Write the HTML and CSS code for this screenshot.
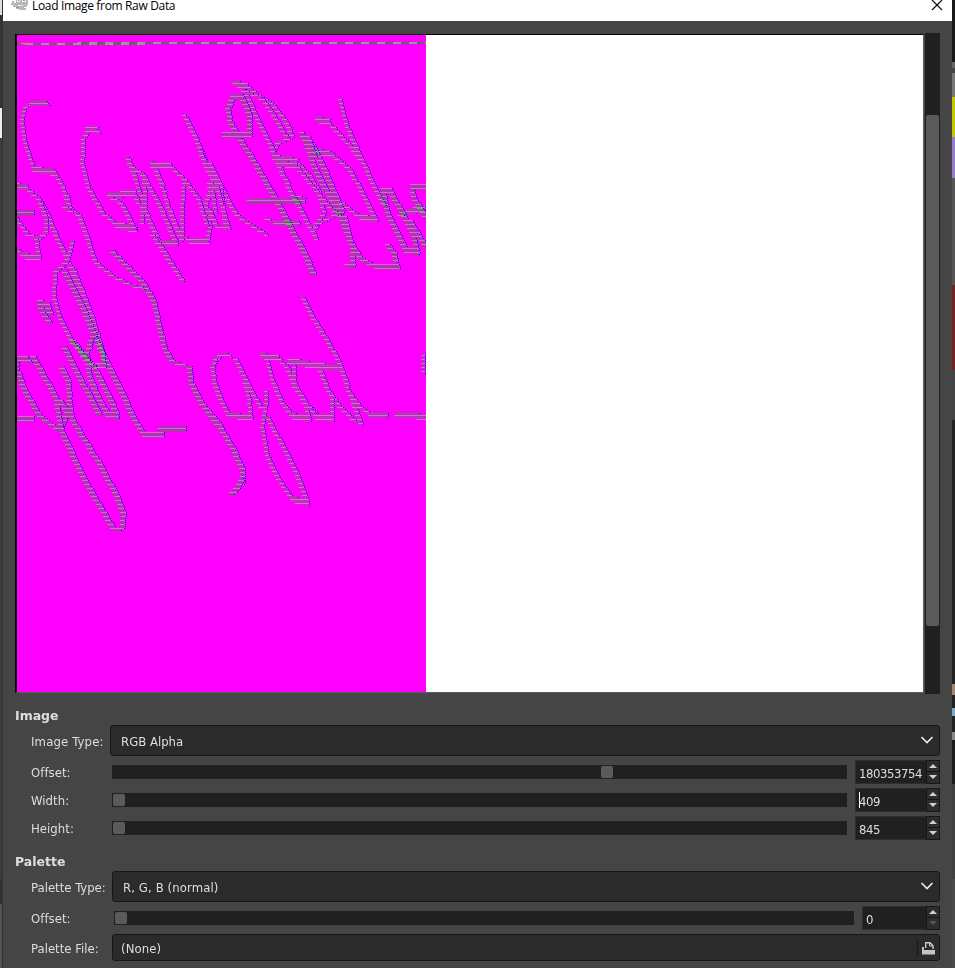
FILE: index.html
```html
<!DOCTYPE html>
<html lang="en">
<head>
<meta charset="utf-8">
<title>Load Image from Raw Data</title>
<link rel="stylesheet" href="styles.css">
</head>
<body>
<div class="desktop">
  <div class="edge-left"></div>
  <main class="dialog">
    <header class="titlebar">
      <svg class="logo" width="18" height="15" viewBox="0 0 18 15"><path fill="#b8b8b8" d="M1 3h2v2h2V0h11v2h1v5h-1v2h-3v1h2v2H8v-1H5V9H2V7H0V5h1z"/><path fill="#eee" d="M6 1h3v3H6zM11 1h4v3h-4zM7 7h5v1H7z"/><path fill="#999" d="M7 2h1v1H7zM12 2h2v1h-2zM5 9h3v1H5z"/></svg>
      <h1>Load Image from Raw Data</h1>
      <svg class="close" width="12" height="12" viewBox="0 0 12 12"><path d="M1 0L11 10M11 0L1 10" stroke="#111" stroke-width="1.2"/></svg>
    </header>
    <section class="view">
      <div class="frame"><canvas id="preview" width="409" height="657"></canvas></div>
      <div class="scroll"><div class="thumb"></div></div>
    </section>
    <section class="group image">
      <h2>Image</h2>
      <div class="row combo-row"><label>Image Type:</label><div class="combo"><span>RGB Alpha</span><svg class="chev" width="14" height="8"><path d="M1.5 1L7 6.5L12.500 1"/></svg></div></div>
      <div class="row"><label>Offset:</label><div class="track"><i class="knob mid"></i></div><div class="spin"><span>180353754</span><div class="btns"><b><i class="up"></i></b><b><i class="down"></i></b></div></div></div>
      <div class="row"><label>Width:</label><div class="track"><i class="knob"></i></div><div class="spin"><span class="caret">409</span><div class="btns"><b><i class="up"></i></b><b><i class="down"></i></b></div></div></div>
      <div class="row"><label>Height:</label><div class="track"><i class="knob"></i></div><div class="spin"><span>845</span><div class="btns"><b><i class="up"></i></b><b><i class="down"></i></b></div></div></div>
    </section>
    <section class="group palette">
      <h2>Palette</h2>
      <div class="row combo-row"><label>Palette Type:</label><div class="combo"><span>R, G, B (normal)</span><svg class="chev" width="14" height="8"><path d="M1.500 1L7 6.500L12.500 1"/></svg></div></div>
      <div class="row"><label>Offset:</label><div class="track"><i class="knob"></i></div><div class="spin"><span>0</span><div class="btns"><b><i class="up"></i></b><b><i class="down off"></i></b></div></div></div>
      <div class="row file-row"><label>Palette File:</label><div class="combo file"><span>(None)</span><svg class="open" width="22" height="20" viewBox="0 0 22 20"><path d="M.5 1v18" stroke="#191919"/><path d="M8.700 10V4.700H13l3 3v3.300" fill="none" stroke="#ccc" stroke-width="1.400"/><path d="M12.500 4.500v3.500H16" fill="none" stroke="#ccc"/><path d="M5 9h2v3h11v4.500H5z" fill="#c4c4c4"/></svg></div></div>
    </section>
  </main>
  <div class="edge-right"></div>
</div>
<script src="preview.js"></script>
</body>
</html>
```
FILE: styles.css
```css
* { box-sizing: border-box; }
body { margin: 0; overflow: hidden; background: #454545; color: #dedede; font: 13px "DejaVu Sans Condensed", "DejaVu Sans", sans-serif; font-stretch: condensed; }
.desktop { display: flex; height: 968px; width: 955px; }
.edge-left { width: 3px; flex: none; border-right: 1px solid #333; background: linear-gradient(#ddd 0 15px, #333 15px 108px, #eee 108px 138px, #3c3c3c 138px 879px, #303030 879px 904px, #555 904px); }
.edge-right { width: 3px; flex: none; background: linear-gradient(#181818 0 62px, #666 62px 68px, #444 68px 73px, #777 73px 97px, #c7c500 97px 137px, #967dcc 137px 178px, #555 178px 285px, #722 285px 370px, #444 370px 420px, #222 420px 684px, #a38570 684px 695px, #222 695px 708px, #7ac 708px 716px, #222 716px 732px, #888 732px 740px, #1c1c1c 740px 784px, #414141 784px 879px, #4a4a4a 879px); }
.dialog { width: 949px; height: 968px; display: flex; flex-direction: column; background: #454545; }
.titlebar { height: 21px; background: #fff; color: #000; display: flex; align-items: flex-start; padding: 0 9px 0 8px; }
.titlebar h1 { margin: -2px 0 0 3px; flex: 1; font: 12px/16px "Open Sans", "Noto Sans", sans-serif; letter-spacing: -0.34px; }
.logo { margin-top: -2px; }
.view { margin: 13px 12px 0; display: flex; gap: 1px; height: 660px; }
.frame { width: 909px; height: 659px; border: 1px solid; border-color: #000 #5c5c5c #5c5c5c #000; border-left-width: 2px; background: #fff; }
canvas { display: block; background: #f0f; image-rendering: pixelated; }
.scroll { width: 15px; background: #202020; margin-top: -1px; padding: 82px 1px 0; }
.thumb { height: 511px; border-radius: 2px; background: #5b5b5b; }
.group { padding: 0 12px; }
.image { margin-top: 13px; height: 146px; }
h2 { margin: 0; height: 18px; font: bold 12.5px/18px "DejaVu Sans", sans-serif; }
.row { display: flex; align-items: center; height: 28px; }
label { width: 97px; padding-left: 16px; flex: none; white-space: nowrap; letter-spacing: .04px; }
.palette label { width: 99px; }
.combo-row { height: 33px; padding-bottom: 2px; }
.combo-row label { width: 95px; padding-top: 2px; letter-spacing: .15px; }
.palette .combo-row label, .palette .file-row label { width: 97px; letter-spacing: 0; }
.combo { flex: 1; height: 31px; display: flex; align-items: center; justify-content: space-between; padding: 1px 5px 0 10px; border: 1px solid #161616; border-radius: 3px; background: #2b2b2b; }
.palette .combo { letter-spacing: .1px; }
.chev { margin-top: -3px; }
.file-row { height: 31px; }
.palette .file-row label, .palette .file span { padding-top: 1px; }
.palette .file { height: 27px; padding: 0 0 0 8px; }
.chev path { fill: none; stroke: #eee; stroke-width: 1.6; }
.track { flex: 1; height: 14px; background: #202020; padding: 1px; margin-right: 8px; margin-top: -1px; }
.knob { display: block; width: 12px; height: 12px; border-radius: 2px; background: #5b5b5b; }
.mid { margin-left: 488px; }
.spin { width: 85px; height: 24px; border: 1px solid #2d2d2d; background: #202020; display: flex; justify-content: space-between; margin-top: -1px; }
.spin span { padding: 5px 0 0 3px; line-height: 15px; height: 21px; letter-spacing: -.45px; }
.caret { background: linear-gradient(#fff, #fff) 3px 3px / 1px 16px no-repeat; }
.palette .spin { width: 78px; }
.btns { width: 14px; margin: -1px; height: 24px; background: #171717; display: grid; gap: 1px; padding: 1px; }
.btns b { background: #2d2d2d; display: grid; place-items: center; }
.up, .down { width: 0; height: 0; border: 4px solid transparent; border-top: 0; border-bottom-color: #d0d0d0; }
.down { border-bottom: 0; border-top: 4px solid #d0d0d0; }
.off { border-top-color: #555; }
```
FILE: preview.js
```js
const ctx = document.getElementById('preview').getContext('2d');
ctx.fillStyle = '#f0f';
ctx.fillRect(0, 0, 409, 657);

// Points are thirds of a pixel relative to the (ox, oy) origin.
// Bold strokes occupy odd scanlines, faint strokes the even ones.
function stroke(ox, oy, pts, bold) {
  const rows = new Map();
  for (let k = 0; k + 3 < pts.length; k += 2) {
    const x0 = ox + pts[k] / 3, y0 = oy + pts[k + 1] / 3;
    const x1 = ox + pts[k + 2] / 3, y1 = oy + pts[k + 3] / 3;
    const n = Math.ceil(Math.max(Math.abs(x1 - x0), Math.abs(y1 - y0)) * 2) + 1;
    for (let i = 0; i <= n; i++) {
      const x = x0 + (x1 - x0) * i / n, y = y0 + (y1 - y0) * i / n;
      const flat = Math.abs(y1 - y0) < Math.abs(x1 - x0) * .3;
      for (let d = flat ? -2 : 0; d <= (flat ? 2 : 0); d += 2) {
        const r = Math.round((y + d) / 2) * 2;
        const s = rows.get(r) || [];
        const last = s.find(q => x >= q[0] - 4 && x <= q[1] + 4);
        if (last) { last[0] = Math.min(last[0], x); last[1] = Math.max(last[1], x); }
        else s.push([x, x]);
        rows.set(r, s);
      }
    }
  }
  for (const [r, spans] of rows) for (const [a, b] of spans) {
    const l = Math.round(a) - 19, w = Math.round(b - a) + (bold ? 4 : 3);
    const y = r - (bold ? 35 : 36);
    const light = r % 4 === 0;
    if (bold) {
      ctx.fillStyle = light ? '#8f998f' : '#5e6b5e';
      ctx.fillRect(l - 1, y, w + 1, 1);
      ctx.fillStyle = '#00f';
      ctx.fillRect(l + w, y, 1, 1);
    } else {
      ctx.fillStyle = light ? '#b580b5' : '#904d90';
      ctx.fillRect(l - 1, y, w + 1, 1);
      ctx.fillStyle = light ? '#999' : '#707070';
      ctx.fillRect(l, y, Math.max(2, w - 2), 1);
      ctx.fillStyle = '#20e';
      ctx.fillRect(l + w, y, 1, 1);
    }
  }
}

const upperLeft = [
  [148,80,140,73,100,73,78,82,68,125,78,190,105,270,165,280,190,318,210,385,240,410,268,485,290,550,340,590,390,615,430,628],
  [205,345,210,375,195,385,218,397], [300,164,293,152,265,152,253,180,250,250,270,330,310,400,350,435,408,452],
  [384,233,410,300,430,360,430,430], [390,256,430,285,480,375,530,490,480,490,440,400,435,290],
  [330,348,405,342,418,370], [335,355,365,370,405,450], [457,245,490,320,510,390,548,485],
  [460,255,510,258,555,300,550,380,550,470,575,484,625,484,633,440,620,370,640,320,660,320],
  [555,300,600,360,625,440], [556,107,600,200,630,280,660,345], [600,210,625,270,655,310], [460,465,500,530,550,605],
  [50,320,80,325,120,360,150,420,180,490,210,555,245,640], [120,365,142,420,140,460,120,478,85,465,50,415],
  [50,508,75,530,120,535,112,480], [220,486,205,545,168,580,165,658], [638,320,650,400]
];
upperLeft.forEach(p => stroke(0, 80, p));
const upperRight = [
  [75,42,110,50,150,80,190,105,230,155,250,205,205,220,190,250], [105,62,145,150,185,230,220,315,270,415,322,508],
  [95,60,160,90,195,140,235,210], [195,265,260,275,300,315,330,370,345,430,315,480], [205,280,260,290,310,350,350,400,390,440],
  [323,150,355,158,420,225,450,268], [392,90,415,175,450,255,485,330,525,410], [325,245,370,258,420,300,460,370,500,450,455,445,395,400],
  [0,280,40,360,80,435,130,470,170,495], [0,350,35,355,50,480,20,470,0,420], [25,355,60,480],
  [170,450,200,460,265,460], [310,470,355,450,390,430], [570,440,600,425,640,420]
];
upperRight.forEach(p => stroke(210, 70, p));
const lowerLeft = [
  [220,85,250,160,285,250,310,330,315,380,290,380], [168,100,165,170,180,230,220,310,285,380],
  [478,10,510,60,550,125], [658,355,640,380,645,430,657,465]
];
lowerLeft.forEach(p => stroke(0, 240, p));
const lowerRight = [
  [95,202,80,194,50,205,42,230,45,280,65,330,90,378,155,385,150,330,135,275],
  [108,208,140,270,160,310,185,355], [190,200,235,205,265,235,285,290,320,345,350,370],
  [205,215,220,275,245,335,280,380,330,390,320,340], [270,218,325,220,360,235,385,300,420,350,470,398],
  [285,230,285,280,325,350,355,382,400,388,400,330], [325,230,425,232], [308,22,345,90,385,155,420,220,445,290,465,350,485,405],
  [445,300,480,350,515,378,560,378], [590,378,678,382], [200,305,200,350,190,410,205,500,235,565,280,630,325,640,295,560,245,460,205,385], [672,200,673,250]
];
lowerRight.forEach(p => stroke(200, 290, p));

const boldRight = [
  [95,75,70,76,55,115,62,155,80,190,120,250,160,320,200,390,240,465,280,540,314,613], [95,78,120,135,120,195], [120,192,44,192],
  [120,390,280,388], [265,378,280,385], [275,188,290,215,315,290,350,360,385,420,405,470,430,530,430,590,410,580],
  [290,195,320,245,345,300,375,370,398,425], [300,210,315,255], [405,440,425,520,455,565,500,590,562,590,555,550,535,523],
  [520,358,535,430,560,480,590,540,622,543,610,490,585,440,540,358,520,358], [648,348,608,348,612,380,648,440], [600,450,648,530]
];
boldRight.forEach(p => stroke(210, 70, p, true));
const boldLeft = [
  [335,28,370,65,430,125,465,190,480,260,500,335,520,365,570,380,575,430,610,495,658,560],
  [192,90,240,180,285,290,325,370,365,450,400,530,435,582,486,582], [484,566,554,566], [120,188,145,195,155,220,122,205,150,245],
  [195,320,240,410,298,522], [220,300,260,360,290,390,325,460,352,525,325,520,295,470,270,410,262,340,280,285],
  [90,365,80,355,52,355,52,390,75,450,120,525,180,570,205,505,210,460,205,420,185,380],
  [98,345,130,400,170,475,180,540,190,580,240,690,290,780,340,862,355,868,368,862,372,820,350,765,300,670,250,590,215,530,180,480],
  [50,535,94,535], [210,480,215,520]
];
boldLeft.forEach(p => stroke(0, 240, p, true));
stroke(200, 290, [0,330,50,390,95,465,130,540,130,575,95,610], true);
stroke(200, 290, [124,565,115,590,102,606], true);
stroke(0, 80, [50,398,95,398], true);

// Band of stray pixels along the top of the preview.
for (let x = 0; x < 409; x++) {
  ctx.fillStyle = Math.floor(x / 8) % 2 ? '#999' : '#666';
  const raised = x >= 60 && x < 128;
  ctx.fillRect(x, x < 60 ? 8 : 7, 1, raised ? 3 : 2);
}
ctx.fillStyle = '#bb0';
[[4,8,5],[41,8,3],[93,9,3]].forEach(([x, y, w]) => ctx.fillRect(x, y, w, 1));
```
